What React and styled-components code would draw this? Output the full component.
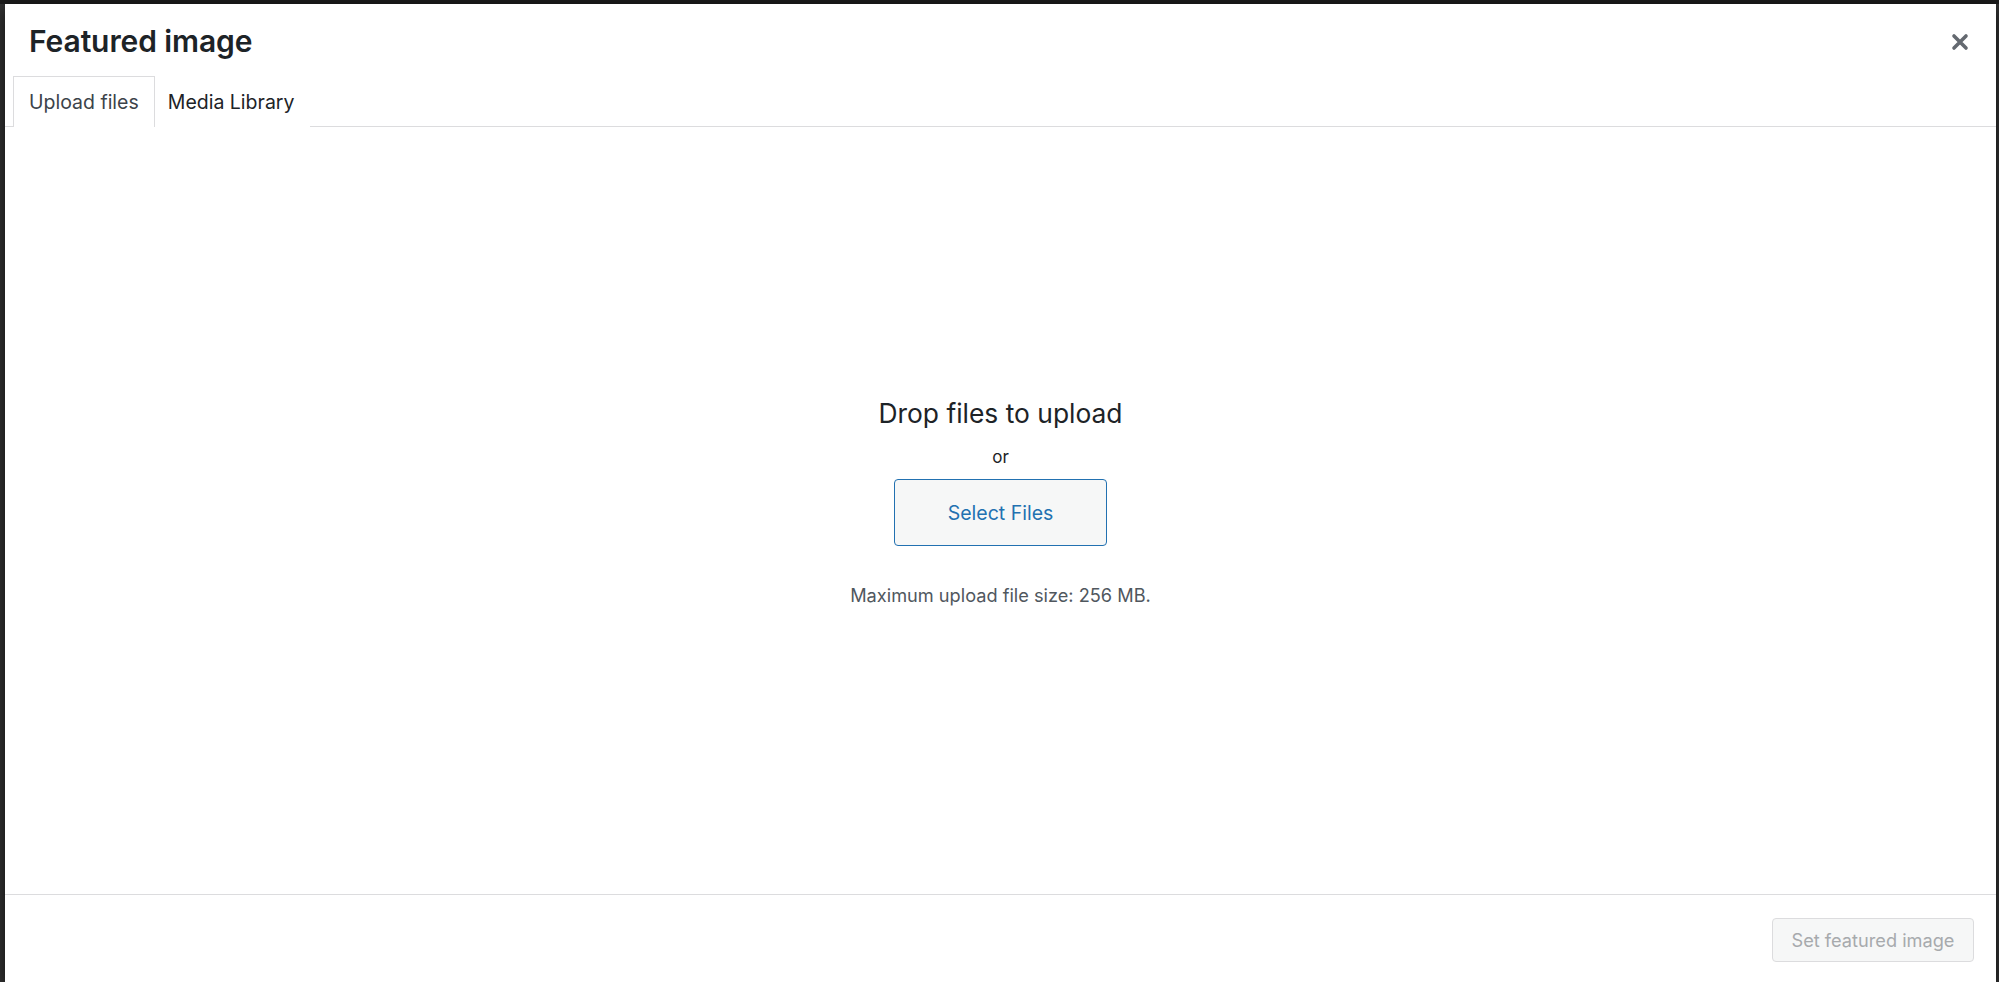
import React from "react";
import styled, { createGlobalStyle } from "styled-components";

const Global = createGlobalStyle`
  html, body { margin: 0; padding: 0; }
  body {
    background: #333333;
    font-family: Inter, "Noto Sans", "Liberation Sans", sans-serif;
    overflow: hidden;
  }
`;

const Backdrop = styled.div`
  height: 982px;
  padding: 4px 3px 0 5px;
  box-sizing: border-box;
  background: linear-gradient(#1c1c1c 0, #1c1c1c 4px, #333333 4px);
`;

const Modal = styled.div`
  background: #ffffff;
  height: 978px;
  display: flex;
  flex-direction: column;
  box-shadow: 0 5px 15px rgba(0, 0, 0, 0.7);
`;

const Header = styled.div`
  height: 72px;
  display: flex;
  justify-content: space-between;
  align-items: flex-start;
  flex: none;
`;

const Title = styled.h1`
  margin: 0;
  padding: 2px 0 0 24px;
  font-size: 30px;
  font-weight: 600;
  line-height: 70px;
  color: #1d2327;
  letter-spacing: -0.1px;
`;

const CloseButton = styled.button`
  width: 50px;
  height: 50px;
  margin: 13px 11px 0 0;
  border: 0;
  background: transparent;
  display: flex;
  align-items: center;
  justify-content: center;
  padding: 0;
  cursor: pointer;
  color: #646970;
`;

const TabBar = styled.div`
  display: flex;
  height: 50px;
  padding-left: 8px;
  border-bottom: 1px solid #dcdcde;
  flex: none;
`;

const Tab = styled.div`
  height: 51px;
  box-sizing: border-box;
  padding: 0 15px 0 ${(p) => (p.$active ? "15px" : "12px")};
  display: flex;
  align-items: center;
  font-size: 19.5px;
  color: ${(p) => (p.$active ? "#3c434a" : "#1d2327")};
  background: #ffffff;
  border: 1px solid ${(p) => (p.$active ? "#dcdcde" : "transparent")};
  border-bottom: 0;
  margin-bottom: -1px;
`;

const Content = styled.div`
  flex: 1;
  display: flex;
  flex-direction: column;
  align-items: center;
  padding-top: 269px;
`;

const DropTitle = styled.h2`
  margin: 0;
  font-size: 26.4px;
  font-weight: 400;
  line-height: 34px;
  color: #1d2327;
`;

const Or = styled.p`
  margin: 16px 0 0;
  font-size: 17px;
  line-height: 22px;
  color: #1d2327;
`;

const HeroButton = styled.button`
  margin-top: 11px;
  width: 213px;
  height: 67px;
  box-sizing: border-box;
  border: 1px solid #2271b1;
  border-radius: 4px;
  background: #f6f7f7;
  color: #2271b1;
  font-family: inherit;
  font-size: 19.5px;
  cursor: pointer;
`;

const MaxSize = styled.p`
  margin: 37px 0 0;
  font-size: 18.2px;
  line-height: 24px;
  color: #50575e;
`;

const Footer = styled.div`
  flex: none;
  height: 88px;
  border-top: 1px solid #dcdcde;
  display: flex;
  justify-content: flex-end;
  align-items: flex-start;
  padding: 23px 22px 0 0;
  box-sizing: border-box;
`;

const DisabledButton = styled.button`
  width: 202px;
  height: 44px;
  box-sizing: border-box;
  border: 1px solid #dcdcde;
  border-radius: 4px;
  background: #f6f7f7;
  color: #a7aaad;
  font-family: inherit;
  font-size: 18.2px;
  cursor: default;
`;

function CloseIcon() {
  return (
    <svg width="18" height="18" viewBox="0 0 18 18" aria-hidden="true">
      <path
        d="M3 3 L15 15 M15 3 L3 15"
        stroke="currentColor"
        strokeWidth="3.6"
        strokeLinecap="round"
        fill="none"
      />
    </svg>
  );
}

export default function App() {
  return (
    <>
      <Global />
      <Backdrop>
        <Modal>
          <Header>
            <Title>Featured image</Title>
            <CloseButton aria-label="Close dialog">
              <CloseIcon />
            </CloseButton>
          </Header>
          <TabBar>
            <Tab $active>Upload files</Tab>
            <Tab>Media Library</Tab>
          </TabBar>
          <Content>
            <DropTitle>Drop files to upload</DropTitle>
            <Or>or</Or>
            <HeroButton>Select Files</HeroButton>
            <MaxSize>Maximum upload file size: 256 MB.</MaxSize>
          </Content>
          <Footer>
            <DisabledButton disabled>Set featured image</DisabledButton>
          </Footer>
        </Modal>
      </Backdrop>
    </>
  );
}
